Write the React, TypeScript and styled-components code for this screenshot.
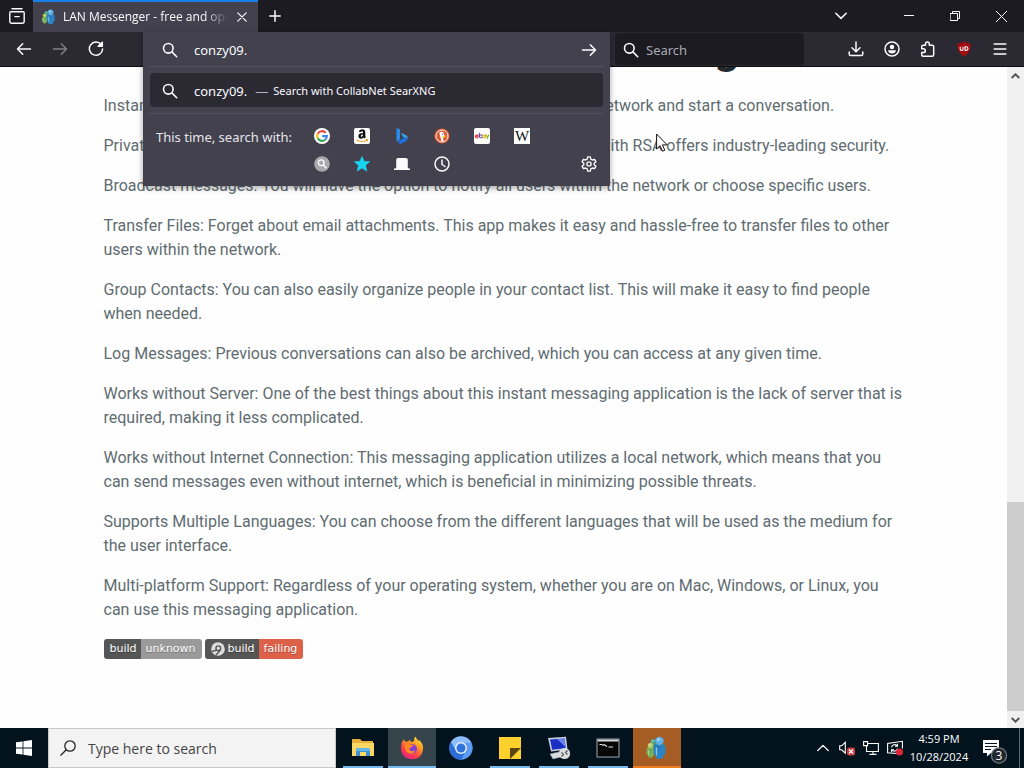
import React from "react";
import styled, { createGlobalStyle } from "styled-components";

const GlobalStyle = createGlobalStyle`
  *, *::before, *::after { box-sizing: border-box; }
  html, body { margin: 0; height: 100%; }
  body { overflow: hidden; background: #fff; }
  button, input { font: inherit; color: inherit; border: 0; background: none; padding: 0; margin: 0; outline: 0; }
  svg { display: block; flex: none; }
`;

const ui = `"Noto Sans", "Open Sans", sans-serif`;

const Screen = styled.div`
  display: flex;
  flex-direction: column;
  height: 100vh;
  position: relative;
  font-family: ${ui};
`;

/* ---- browser chrome ---- */

const TabStrip = styled.header`
  display: flex;
  flex: none;
  height: 32px;
  background: #1c1b22;
  color: #fbfbfe;
`;

const StripButton = styled.button<{ $w: number }>`
  width: ${(p) => p.$w}px;
  display: flex;
  align-items: center;
  justify-content: center;
`;

const Tab = styled.div`
  display: flex;
  align-items: center;
  width: 225px;
  padding: 0 8px;
  gap: 6px;
  background: #42414d;
  border-top: 2px solid #1a7fe8;
`;

const TabTitle = styled.span`
  flex: 1;
  min-width: 0;
  overflow: hidden;
  white-space: nowrap;
  font-family: "Open Sans", sans-serif;
  font-size: 12px;
  line-height: 16px;
  mask-image: linear-gradient(to left, transparent, #000 24px);
`;

const Spacer = styled.div`
  flex: 1;
`;

const WindowControls = styled.div`
  display: flex;
  margin-left: 30px;
`;

const Toolbar = styled.nav`
  display: flex;
  flex: none;
  align-items: center;
  height: 35px;
  padding: 0 6px;
  background: #2b2a33;
  border-bottom: 1px solid #0c0c0d;
  color: #fbfbfe;
`;

const ToolButton = styled.button<{ $dim?: boolean }>`
  display: flex;
  align-items: center;
  justify-content: center;
  width: 36px;
  height: 32px;
  opacity: ${(p) => (p.$dim ? 0.4 : 1)};
`;

const UrlSlot = styled.div`
  flex: 1;
  position: relative;
  align-self: stretch;
  margin: 0 5px 0 29px;
`;

const UrlPanel = styled.div`
  position: absolute;
  z-index: 2;
  top: 0;
  left: 0;
  right: 0;
  padding: 0 7px 8px;
  background: #42414d;
  box-shadow: 0 2px 6px rgba(0, 0, 0, 0.35);
  font-size: 13px;
`;

const UrlRow = styled.div`
  display: flex;
  align-items: center;
  height: 35px;
  padding: 1px 7px 0 13px;
  gap: 16px;
  margin: 0 -1px;
  border-bottom: 1px solid #53525e;
`;

const UrlInput = styled.input`
  flex: 1;
  min-width: 0;
`;

const GoButton = styled.button`
  display: flex;
`;

const Suggestion = styled.button`
  display: flex;
  align-items: center;
  width: 100%;
  height: 34px;
  margin: 6px 0;
  padding: 1px 12px 0;
  border-radius: 4px;
  background: #2b2a33;
`;

const SuggestionQuery = styled.span`
  margin-left: 16px;
`;

const SuggestionAction = styled.span`
  margin-left: 5px;
  font-size: 11px;
`;

const Dash = styled.span`
  margin-left: 8px;
  color: #b5b5bd;
`;

const EngineArea = styled.div`
  display: flex;
  align-items: flex-start;
  margin: 0 -1px;
  padding: 8px 0 0 7px;
  border-top: 1px solid #53525e;
`;

const EngineLabel = styled.span`
  width: 146px;
  line-height: 30px;
  white-space: nowrap;
  color: #e6e6ec;
`;

const EngineGrid = styled.div`
  display: grid;
  grid-template-columns: repeat(6, 40px);
  grid-auto-rows: 28px;
  flex: 1;
`;

const EngineButton = styled.button`
  display: flex;
  align-items: center;
  justify-content: center;
`;

const SettingsButton = styled(EngineButton)`
  align-self: flex-end;
  width: 28px;
  height: 28px;
  margin-right: 1px;
`;

const SearchBox = styled.label`
  display: flex;
  align-items: center;
  width: 189px;
  height: 32px;
  gap: 7px;
  padding: 1px 8px 0;
  margin: 0 34px 0 0;
  border-radius: 4px;
  background: #1c1b22;
  font-size: 13px;
`;

const SearchInput = styled.input`
  flex: 1;
  min-width: 0;
  &::placeholder { color: #a9a9b2; opacity: 1; }
`;

/* ---- web page ---- */

const Viewport = styled.div`
  display: flex;
  flex: 1;
  min-height: 0;
  background: #fefefe;
`;

const Page = styled.main`
  flex: 1;
  min-width: 0;
  overflow: hidden;
  display: flex;
  justify-content: center;
`;

const Article = styled.article`
  width: 100%;
  max-width: 800px;
  font-family: Roboto, sans-serif;
  font-size: 16px;
  line-height: 24px;
  color: #606c71;
`;

const Heading = styled.h2`
  margin: -43px 0 22px;
  text-align: center;
  font-size: 44px;
  line-height: 48px;
  font-weight: 700;
  color: #24292e;
`;

const Paragraph = styled.p`
  margin: 0 0 16px;
`;

const Badges = styled.div`
  display: flex;
  gap: 3px;
  padding-top: 1px;
  font-family: "DejaVu Sans", sans-serif;
  font-size: 11px;
  line-height: 20px;
  color: #fff;
`;

const Badge = styled.a`
  display: flex;
  color: inherit;
  text-decoration: none;
  border-radius: 3px;
  overflow: hidden;
  text-shadow: 0 1px 0 rgba(0, 0, 0, 0.3);
`;

const BadgePart = styled.span<{ $color: string }>`
  display: flex;
  align-items: center;
  gap: 3px;
  padding: 0 5px;
  background: ${(p) => p.$color};
  &:first-child { padding: 0 4px 0 6px; }
  &:last-child { padding: 0 6px 0 5px; }
`;

const Scrollbar = styled.div`
  display: flex;
  flex-direction: column;
  align-items: center;
  width: 17px;
  background: #f0f0f0;
`;

const ScrollButton = styled.button`
  display: flex;
  align-items: center;
  justify-content: center;
  width: 17px;
  height: 17px;
`;

const ScrollTrack = styled.div`
  display: flex;
  flex-direction: column;
  justify-content: flex-end;
  flex: 1;
  width: 100%;
`;

const ScrollThumb = styled.div`
  height: 33.3%;
  background: #cdcdcd;
`;

const Pointer = styled.svg`
  position: absolute;
  z-index: 3;
  left: 656px;
  top: 133px;
`;

/* ---- taskbar ---- */

const Taskbar = styled.footer`
  display: flex;
  flex: none;
  height: 40px;
  background: #02131d;
  color: #fff;
`;

const StartButton = styled.button`
  display: flex;
  align-items: center;
  justify-content: center;
  width: 48px;
`;

const TaskSearch = styled.label`
  display: flex;
  align-items: center;
  width: 288px;
  gap: 12px;
  padding: 0 11px;
  border: 1px solid #c8c8c8;
  background: #f3f3f3;
  color: #333;
`;

const TaskSearchInput = styled.input`
  flex: 1;
  min-width: 0;
  font-family: "Open Sans", sans-serif;
  font-size: 14px;
  &::placeholder { color: #444; opacity: 1; }
`;

const TaskApps = styled.div`
  display: flex;
  gap: 1px;
  margin-left: 3px;
`;

const TaskApp = styled.button<{ $bg?: string; $line?: string; $wide?: boolean }>`
  display: flex;
  align-items: center;
  justify-content: center;
  width: 48px;
  padding-bottom: 1px;
  background: ${(p) => p.$bg ?? "transparent"};
  position: relative;
  &::after {
    content: "";
    position: absolute;
    bottom: 0;
    left: ${(p) => (p.$wide ? 0 : 4)}px;
    right: ${(p) => (p.$wide ? 0 : 4)}px;
    height: 2px;
    background: ${(p) => p.$line ?? "transparent"};
  }
`;

const Tray = styled.div`
  display: flex;
  align-items: center;
`;

const TrayButton = styled.button`
  display: flex;
  align-items: center;
  justify-content: center;
  width: 24px;
  height: 40px;
`;

const Clock = styled.time`
  width: 64px;
  text-align: center;
  white-space: nowrap;
  font-family: "Open Sans", sans-serif;
  font-size: 11px;
  line-height: 18px;
`;

const NoticeButton = styled(TrayButton)`
  width: 48px;
`;

const ShowDesktop = styled.button`
  width: 5px;
  height: 40px;
  border-left: 1px solid #5b6870;
`;

/* ---- icons ---- */

type IconProps = { size?: number; children: React.ReactNode; box?: string; sw?: number };

const Line = ({ size = 16, box = "0 0 16 16", sw = 1.5, children }: IconProps) => (
  <svg width={size} height={size} viewBox={box} fill="none" stroke="currentColor" strokeWidth={sw} strokeLinecap="round" strokeLinejoin="round" aria-hidden="true">
    {children}
  </svg>
);

const Magnifier = () => (
  <Line sw={1.6}>
    <circle cx="6.3" cy="6.3" r="4.8" />
    <path d="M9.9 9.9 14.7 14.7" />
  </Line>
);

const RightArrow = () => (
  <Line><path d="M1.5 8H14.5M9.3 2.8 14.5 8 9.3 13.2" /></Line>
);

const Person = ({ x, y, s, head, body }: { x: number; y: number; s: number; head: string; body: string }) => (
  <g transform={`translate(${x} ${y}) scale(${s})`}>
    <path d="M0 11Q0 7.5 3.5 7.5H8.5Q12 7.5 12 11V17Q11.5 18.5 10 18.5L9.5 21.5Q6 23.4 2.5 21.5L2 18.5Q.5 18.5 0 17Z" fill={body} />
    <path d="M3.5 9.5 6 12 8.5 9.5" fill="none" stroke="#1c5580" strokeWidth=".8" opacity=".6" />
    <circle cx="6" cy="4.4" r="4.2" fill={head} />
    <path d="M3 11V19" stroke="#d5f3ff" strokeWidth="1.2" opacity=".6" />
    <circle cx="5" cy="3.2" r="1.4" fill="#fff" opacity=".5" />
  </g>
);

const Messenger = ({ size }: { size: number }) => (
  <svg width={size} height={size} viewBox="0 0 24 24" aria-hidden="true">
    <Person x={4.5} y={3} s={0.62} head="#4aa596" body="#2f8b80" />
    <Person x={1.5} y={6.5} s={0.68} head="#b3cb5e" body="#7bb052" />
    <Person x={8.5} y={0.5} s={1} head="#5fb0e6" body="#2d84c4" />
  </svg>
);

const Amazon = () => (
  <svg width="16" height="16" viewBox="0 0 16 16" aria-hidden="true">
    <rect width="16" height="16" rx="2" fill="#fff" />
    <path d="M4.7 3.8Q5.2 1.3 8.1 1.3 11.3 1.3 11.3 4.3V7.8Q11.3 8.5 11.9 9.2L10.3 10.6Q9.6 10.2 9.3 9.5 8.3 10.7 6.9 10.7 4.4 10.7 4.4 8.1 4.4 5.2 9 5.1V4.4Q9 3.2 8 3.2 7.1 3.2 6.9 4.1ZM9 6.6Q6.8 6.6 6.8 7.9 6.8 8.8 7.6 8.8 9 8.7 9 6.6Z" fill="#111" fillRule="evenodd" />
    <path d="M2.3 11.8Q7.5 15 13.2 12.2M11.7 11.7 13.7 11.6 13.1 13.4" fill="none" stroke="#f0a22d" strokeWidth="1.1" />
  </svg>
);

const Google = () => (
  <svg width="16" height="16" viewBox="0 0 16 16" aria-hidden="true">
    <circle cx="8" cy="8" r="8" fill="#fff" />
    <g fill="none" strokeWidth="2.1">
      <path d="M11.6 4.7A4.9 4.9 0 0 0 3.7 5.7" stroke="#ea4335" />
      <path d="M3.7 5.7A4.9 4.9 0 0 0 3.7 10.3" stroke="#fbbc05" />
      <path d="M3.7 10.3A4.9 4.9 0 0 0 11.2 11.7" stroke="#34a853" />
      <path d="M11.2 11.7A4.9 4.9 0 0 0 12.9 8.1H8.2" stroke="#4285f4" />
    </g>
  </svg>
);

const Bing = () => (
  <svg width="16" height="16" viewBox="0 0 16 16" aria-hidden="true">
    <path d="M2.5 0 6 1.3V11L3.8 13.8 2.5 12.8Z" fill="#2c8bea" />
    <path d="M7 4.8 12.5 7.5Q14 8.6 13.6 10.5L8.9 8.8Z" fill="#35a6ee" />
    <path d="M3.8 13.8 10 9.4 13.6 10.2Q13.8 12 12 13.3L7.3 15.8Q5.1 16.3 3.8 13.8Z" fill="#1c70d8" />
  </svg>
);

const Duck = () => (
  <svg width="16" height="16" viewBox="0 0 16 16" aria-hidden="true">
    <circle cx="8" cy="8" r="7.6" fill="#de5833" />
    <circle cx="8" cy="8" r="6" fill="none" stroke="#fff" strokeWidth=".9" />
    <path d="M5.3 4.8Q6.5 3 8.6 4 10.5 4.8 10.4 7.5L10 9.2 8.8 10.1 9.8 13.4 7.5 13.6Z" fill="#fff" />
    <path d="M8.7 8.1 12 7.8 11 9.5 8.7 9.6Z" fill="#fdd20a" />
    <circle cx="8.7" cy="6.1" r=".7" fill="#234" />
  </svg>
);

const Ebay = () => (
  <svg width="16" height="16" viewBox="0 0 16 16" aria-hidden="true">
    <rect width="16" height="16" rx="2" fill="#fff" />
    <g fill="none" strokeWidth="1.1">
      <path d="M1.5 8.2H4.4A1.5 1.5 0 1 0 4 9.5" stroke="#e53238" />
      <path d="M5.4 4.8V9.8M5.4 8.3A1.5 1.5 0 1 0 8.4 8.3 1.5 1.5 0 1 0 5.4 8.3" stroke="#6a58b5" />
      <path d="M11.4 6.7V9.8M11.4 8.4A1.3 1.3 0 1 0 8.8 8.4 1.3 1.3 0 1 0 11.4 8.4" stroke="#e9b31b" />
      <path d="M12 6.5 13.5 9.5M15 6.5 12.8 11.3" stroke="#86b817" />
    </g>
  </svg>
);

const WikiGlyph = styled.span`
  width: 16px;
  height: 16px;
  background: #fff;
  color: #111;
  font-family: "Liberation Serif", serif;
  font-size: 15px;
  line-height: 16px;
  text-align: center;
`;

const SearxEngine = () => (
  <svg width="16" height="16" viewBox="0 0 16 16" aria-hidden="true">
    <circle cx="8" cy="8" r="7.8" fill="#a9a9ac" />
    <circle cx="7.2" cy="6.8" r="2.9" fill="none" stroke="#fff" strokeWidth="1.3" />
    <path d="M9.3 9 12.4 12.2" stroke="#fff" strokeWidth="1.5" />
  </svg>
);

const Star = () => (
  <svg width="16" height="16" viewBox="0 0 16 16" aria-hidden="true">
    <path d="M8 .4 10.1 5.3 15.7 5.7 11.5 9.3 12.8 15.1 8 12.1 3.2 15.1 4.5 9.3 .3 5.7 5.9 5.3Z" fill="#17d5f2" stroke="#17d5f2" strokeLinejoin="round" strokeWidth=".6" />
  </svg>
);

const TabsIcon = () => (
  <svg width="16" height="16" viewBox="0 0 16 16" aria-hidden="true">
    <path d="M0 12.6H1.2Q2.2 12.6 2.2 11.6V4Q2.2 2 4.2 2H11.8Q13.8 2 13.8 4V11.6Q13.8 12.6 14.8 12.6H16V14H0Z" fill="#fbfbfe" />
  </svg>
);

const Gear = () => (
  <Line sw={1.4}>
    <circle cx="8" cy="8" r="2.1" />
    <path d="M6.7 .9H9.3L9.8 3.1 11.4 4 13.5 3.3 14.9 5.7 13.2 7.2V8.8L14.9 10.3 13.5 12.7 11.4 12 9.8 12.9 9.3 15.1H6.7L6.2 12.9 4.6 12 2.5 12.7 1.1 10.3 2.8 8.8V7.2L1.1 5.7 2.5 3.3 4.6 4 6.2 3.1Z" />
  </Line>
);

const AppveyorLogo = () => (
  <svg width="14" height="14" viewBox="0 0 14 14" aria-hidden="true">
    <circle cx="7" cy="7" r="6.8" fill="#ddd" />
    <circle cx="7.3" cy="6.3" r="2.4" fill="none" stroke="#555" strokeWidth="1.4" />
    <path d="M1 9.5 5.6 8.2M5 13 9.3 8.2" stroke="#555" strokeWidth="1.3" fill="none" />
  </svg>
);

const Explorer = () => (
  <svg width="24" height="24" viewBox="0 0 24 24" aria-hidden="true">
    <path d="M1 3H9L11 5H22V20H1Z" fill="#e8b03a" />
    <path d="M1 7H23V20H1Z" fill="#fbd865" />
    <path d="M5 20V14Q5 12 7 12H17Q19 12 19 14V20H15V16H9V20Z" fill="#3c93d1" />
    <path d="M5 14Q5 12 7 12H17Q19 12 19 14V15H5Z" fill="#65b6e8" />
  </svg>
);

const Firefox = () => (
  <svg width="24" height="24" viewBox="0 0 24 24" aria-hidden="true">
    <defs>
      <linearGradient id="fox" x1="0.8" y1="0" x2="0.2" y2="1">
        <stop offset="0" stopColor="#ffdf3f" />
        <stop offset=".35" stopColor="#ff9a20" />
        <stop offset=".7" stopColor="#ff3b4d" />
        <stop offset="1" stopColor="#e0218a" />
      </linearGradient>
    </defs>
    <path d="M2 6 4 3.3 5 5.6Q7 5.2 8 5.6L10.3 3.8 10.8 6.3 14.3 5Q13.5 2.5 15.4 .4 16.5 3.3 19.2 5.2L19.3 4Q24 8.5 22.9 14.3 21.3 23.2 12 23.3 2.3 23 1 13.5 .8 9 2 6Z" fill="url(#fox)" />
    <circle cx="12" cy="13" r="5" fill="#8a3fd4" />
    <path d="M4.5 9.2Q8 7 10.5 8.5L14 9 11.3 11.3Q9 11.8 9.2 13.5 11 16.5 15.3 14.5 13.5 18.8 9.2 17.6 5 16 4.5 9.2Z" fill="#ff8a22" />
  </svg>
);

const Chromium = () => (
  <svg width="24" height="24" viewBox="0 0 24 24" aria-hidden="true">
    <circle cx="12" cy="12" r="11.7" fill="#5b9bf2" />
    <path d="M2 6A11.7 11.7 0 0 0 12 23.7L16.8 15Z" fill="#2d6ed6" />
    <path d="M2 6A11.7 11.7 0 0 1 22.3 6.7H12Q6.6 7 6.8 14Z" fill="#8fbcfb" />
    <circle cx="12" cy="12" r="6" fill="#e6f0ff" />
    <circle cx="12" cy="12" r="4.5" fill="#2f73db" />
  </svg>
);

const StickyNote = () => (
  <svg width="24" height="24" viewBox="0 0 24 24" aria-hidden="true">
    <path d="M1 1H23V23H1Z" fill="#fdd02c" />
    <path d="M12 23V12H23Z" fill="#5b4412" />
  </svg>
);

const RemoteDesktop = () => (
  <svg width="24" height="24" viewBox="0 0 24 24" aria-hidden="true">
    <path d="M1 2 19 .8 20.5 13.5 4 15.5Z" fill="#c7cfdf" />
    <path d="M3 3.5 17.5 2.4 18.7 12.2 5.2 13.8Z" fill="#1a2fc4" />
    <path d="M10 3 17.5 2.4 18.5 11Z" fill="#6a86ee" />
    <path d="M3 18 14 15.5 18 20 6 23Z" fill="#d9dce2" stroke="#8a93a5" strokeWidth=".6" />
    <circle cx="17.5" cy="17.5" r="5.6" fill="#dcdfe0" />
    <path d="M14.5 16.5 16.5 18.5 14.5 20.5M20.5 14.5 18.5 16.5 20.5 18.5" fill="none" stroke="#555" strokeWidth="1.2" />
  </svg>
);

const Terminal = () => (
  <svg width="24" height="24" viewBox="0 0 24 24" aria-hidden="true">
    <rect x="1" y="3" width="22" height="18" fill="#070707" stroke="#a3a9ad" />
    <path d="M1.5 4.5H22.5" stroke="#d5d9db" strokeWidth="2" />
    <path d="M3.5 8.5H6M7 8V10M8 8.5 11 10.5M12.5 11H17" stroke="#e6e6e6" strokeWidth="1.2" />
  </svg>
);

const paragraphs = [
  "Instant Messaging: You can easily message some persons within the network and start a conversation.",
  "Private conversations: Messages are encrypted, and using encryption with RSA offers industry-leading security.",
  "Broadcast messages: You will have the option to notify all users within the network or choose specific users.",
  "Transfer Files: Forget about email attachments. This app makes it easy and hassle-free to transfer files to other users within the network.",
  "Group Contacts: You can also easily organize people in your contact list. This will make it easy to find people when needed.",
  "Log Messages: Previous conversations can also be archived, which you can access at any given time.",
  "Works without Server: One of the best things about this instant messaging application is the lack of server that is required, making it less complicated.",
  "Works without Internet Connection: This messaging application utilizes a local network, which means that you can send messages even without internet, which is beneficial in minimizing possible threats.",
  "Supports Multiple Languages: You can choose from the different languages that will be used as the medium for the user interface.",
  "Multi-platform Support: Regardless of your operating system, whether you are on Mac, Windows, or Linux, you can use this messaging application.",
];

const engines: { name: string; icon: React.ReactNode }[] = [
  { name: "Google", icon: <Google /> },
  { name: "Amazon", icon: <Amazon /> },
  { name: "Bing", icon: <Bing /> },
  { name: "DuckDuckGo", icon: <Duck /> },
  { name: "eBay", icon: <Ebay /> },
  { name: "Wikipedia", icon: <WikiGlyph>W</WikiGlyph> },
  { name: "SearXNG", icon: <SearxEngine /> },
  { name: "Bookmarks", icon: <Star /> },
  { name: "Tabs", icon: <TabsIcon /> },
  { name: "History", icon: <Line><circle cx="8" cy="8" r="7" /><path d="M8 4V8.5L11 10.5" /></Line> },
];

const blue = "#76b9ed";

const apps: { name: string; icon: React.ReactNode; bg?: string; line?: string; wide?: boolean }[] = [
  { name: "File Explorer", icon: <Explorer />, line: blue },
  { name: "Firefox", icon: <Firefox />, bg: "#36444c", line: blue, wide: true },
  { name: "Chromium", icon: <Chromium /> },
  { name: "Sticky Notes", icon: <StickyNote />, line: blue },
  { name: "Remote Desktop", icon: <RemoteDesktop />, line: blue },
  { name: "Command Prompt", icon: <Terminal />, line: blue },
  { name: "LAN Messenger", icon: <Messenger size={24} />, bg: "#a65d24", line: "#f07d1c", wide: true },
];

export default function App() {
  return (
    <Screen>
      <GlobalStyle />
      <TabStrip>
        <StripButton $w={33} aria-label="Firefox View">
          <Line sw={1.4}>
            <path d="M3 .8H13M1.8 3.8H14.2Q15.2 3.8 15.2 4.8V13.2Q15.2 15.2 13.2 15.2H2.8Q.8 15.2 .8 13.2V4.8Q.8 3.8 1.8 3.8ZM5.8 8.6H10.2" />
          </Line>
        </StripButton>
        <Tab>
          <Messenger size={16} />
          <TabTitle>LAN Messenger - free and open source</TabTitle>
          <StripButton $w={16} aria-label="Close tab">
            <Line size={10} box="0 0 10 10" sw={1.2}><path d="M.8 .8 9.2 9.2M9.2 .8 .8 9.2" /></Line>
          </StripButton>
        </Tab>
        <StripButton $w={33} aria-label="New tab">
          <Line size={12} box="0 0 12 12"><path d="M6 .8V11.2M.8 6H11.2" /></Line>
        </StripButton>
        <Spacer />
        <StripButton $w={30} aria-label="List all tabs">
          <Line size={12} box="0 0 12 12"><path d="M.8 3.2 6 8.4 11.2 3.2" /></Line>
        </StripButton>
        <WindowControls>
          <StripButton $w={46} aria-label="Minimize">
            <Line size={10} box="0 0 10 10" sw={1}><path d="M0 4.5H10" /></Line>
          </StripButton>
          <StripButton $w={46} aria-label="Restore">
            <Line size={10} box="0 0 10 10" sw={1}><path d="M.5 2.5H7.5V9.5H.5ZM2.5 2.5V.5H9.5V7.5H7.5" /></Line>
          </StripButton>
          <StripButton $w={46} aria-label="Close">
            <Line size={11} box="0 0 11 11" sw={1}><path d="M.3 .3 10.7 10.7M10.7 .3 .3 10.7" /></Line>
          </StripButton>
        </WindowControls>
      </TabStrip>

      <Toolbar>
        <ToolButton aria-label="Back">
          <Line><path d="M14.5 8H1.5M6.7 2.8 1.5 8 6.7 13.2" /></Line>
        </ToolButton>
        <ToolButton aria-label="Forward" $dim><RightArrow /></ToolButton>
        <ToolButton aria-label="Reload">
          <Line><path d="M13.2 3.6A6.6 6.6 0 1 0 14.6 8" /><path d="M14.3 1.3V5.3H10.2Z" fill="currentColor" /></Line>
        </ToolButton>
        <UrlSlot>
          <UrlPanel>
            <UrlRow>
              <Magnifier />
              <UrlInput aria-label="Address" defaultValue="conzy09." />
              <GoButton aria-label="Go"><RightArrow /></GoButton>
            </UrlRow>
            <Suggestion>
              <Magnifier />
              <SuggestionQuery>conzy09.</SuggestionQuery>
              <Dash>—</Dash>
              <SuggestionAction>Search with CollabNet SearXNG</SuggestionAction>
            </Suggestion>
            <EngineArea>
              <EngineLabel>This time, search with:</EngineLabel>
              <EngineGrid>
                {engines.map((e) => (
                  <EngineButton key={e.name} aria-label={e.name}>{e.icon}</EngineButton>
                ))}
              </EngineGrid>
              <SettingsButton aria-label="Search settings"><Gear /></SettingsButton>
            </EngineArea>
          </UrlPanel>
        </UrlSlot>
        <SearchBox>
          <Magnifier />
          <SearchInput placeholder="Search" aria-label="Search" />
        </SearchBox>
        <ToolButton aria-label="Downloads">
          <Line><path d="M8 1V10.5M4 6.8 8 10.7 12 6.8M1.2 11V13Q1.2 14.6 2.8 14.6H13.2Q14.8 14.6 14.8 13V11" /></Line>
        </ToolButton>
        <ToolButton aria-label="Account">
          <Line>
            <circle cx="8" cy="8" r="7" />
            <circle cx="8" cy="6" r="2.2" fill="currentColor" stroke="none" />
            <path d="M4 9.2H12Q11.4 12.4 8 12.4 4.6 12.4 4 9.2Z" fill="currentColor" stroke="none" />
          </Line>
        </ToolButton>
        <ToolButton aria-label="Extensions">
          <Line><path d="M5.5 4.2V2.8A1.9 1.9 0 0 1 9.3 2.8V4.2H12.2Q13.7 4.2 13.7 5.7V13.7Q13.7 15.2 12.2 15.2H3.2Q1.7 15.2 1.7 13.7V11.6H3.4A1.9 1.9 0 0 0 3.4 7.8H1.7V5.7Q1.7 4.2 3.2 4.2Z" /></Line>
        </ToolButton>
        <ToolButton aria-label="uBlock Origin">
          <svg width="16" height="16" viewBox="0 0 16 16" aria-hidden="true">
            <path d="M8 .5Q10.5 2.5 14.5 2.5 15.5 11.5 8 15.5 .5 11.5 1.5 2.5 5.5 2.5 8 .5Z" fill="#a30d12" />
            <path d="M4.2 5.8V8Q4.2 9.4 5.6 9.4 7 9.4 7 8V5.8M9 5.8V9.4H10Q12 9.4 12 7.6 12 5.8 10 5.8Z" fill="none" stroke="#fff" strokeWidth="1.1" />
          </svg>
        </ToolButton>
        <ToolButton aria-label="Menu">
          <Line><path d="M2.2 3H13.8M2.2 8H13.8M2.2 13H13.8" /></Line>
        </ToolButton>
      </Toolbar>

      <Viewport>
        <Page>
          <Article>
            <Heading>Features of LAN Messenger</Heading>
            {paragraphs.map((t) => (
              <Paragraph key={t}>{t}</Paragraph>
            ))}
            <Badges>
              <Badge href="#travis">
                <BadgePart $color="#555">build</BadgePart>
                <BadgePart $color="#9a9a9a">unknown</BadgePart>
              </Badge>
              <Badge href="#appveyor">
                <BadgePart $color="#555"><AppveyorLogo />build</BadgePart>
                <BadgePart $color="#dd6149">failing</BadgePart>
              </Badge>
            </Badges>
          </Article>
        </Page>
        <Scrollbar>
          <ScrollButton aria-label="Scroll up">
            <svg width="9" height="6" viewBox="0 0 9 6" fill="none" stroke="#555" strokeWidth="2"><path d="M.7 5 4.5 1.3 8.3 5" /></svg>
          </ScrollButton>
          <ScrollTrack><ScrollThumb /></ScrollTrack>
          <ScrollButton aria-label="Scroll down">
            <svg width="9" height="6" viewBox="0 0 9 6" fill="none" stroke="#555" strokeWidth="2"><path d="M.7 1 4.5 4.7 8.3 1" /></svg>
          </ScrollButton>
        </Scrollbar>
      </Viewport>

      <Taskbar>
        <StartButton aria-label="Start">
          <svg width="16" height="16" viewBox="0 0 16 16" fill="#fff" aria-hidden="true">
            <path d="M0 2.3 6.6 1.4V7.6H0ZM7.4 1.3 16 0V7.6H7.4ZM0 8.4H6.6V14.6L0 13.7ZM7.4 8.4H16V16L7.4 14.7Z" />
          </svg>
        </StartButton>
        <TaskSearch>
          <svg width="16" height="16" viewBox="0 0 16 16" fill="none" stroke="#222" strokeWidth="1.3" aria-hidden="true">
            <circle cx="10" cy="6" r="5.2" />
            <path d="M6.3 9.7 .5 15.5" />
          </svg>
          <TaskSearchInput placeholder="Type here to search" aria-label="Type here to search" />
        </TaskSearch>
        <TaskApps>
          {apps.map((a) => (
            <TaskApp key={a.name} aria-label={a.name} $bg={a.bg} $line={a.line} $wide={a.wide}>{a.icon}</TaskApp>
          ))}
        </TaskApps>
        <Spacer />
        <Tray>
          <TrayButton aria-label="Show hidden icons">
            <Line size={12} box="0 0 12 12" sw={1.2}><path d="M.8 8.5 6 3.3 11.2 8.5" /></Line>
          </TrayButton>
          <TrayButton aria-label="Volume muted">
            <svg width="16" height="16" viewBox="0 0 16 16" fill="none" aria-hidden="true">
              <path d="M.7 5.8H2.7L6.3 2.3V13.2L2.7 9.8H.7Z" stroke="#fff" strokeWidth="1.1" />
              <rect x="8" y="7.5" width="8" height="8" rx="2" fill="#d13a40" />
              <path d="M10 9.5 14 13.5M14 9.5 10 13.5" stroke="#fff" strokeWidth="1.3" />
            </svg>
          </TrayButton>
          <TrayButton aria-label="Network">
            <svg width="16" height="16" viewBox="0 0 16 16" fill="none" stroke="#fff" strokeWidth="1.1" aria-hidden="true">
              <path d="M5 3.5H15.4V11.5H3.5V6M10 11.5V14.4M6.5 14.4H13.5M.6 1.6H4.6V5.6H.6Z" />
            </svg>
          </TrayButton>
          <TrayButton aria-label="Windows Update">
            <svg width="16" height="16" viewBox="0 0 16 16" fill="none" stroke="#fff" strokeWidth="1.1" aria-hidden="true">
              <path d="M10 13.5.6 12.7V3.5L15.4 1.3V8.5" />
              <path d="M4.5 7.3A3.2 3.2 0 0 1 10.3 6M10.5 3.8V6.3H8M10.5 8.6A3.2 3.2 0 0 1 5 10M4.6 12.2V9.7H7" />
              <circle cx="12.5" cy="12" r="3.5" fill="#e02338" stroke="none" />
            </svg>
          </TrayButton>
          <Clock>4:59 PM<br />10/28/2024</Clock>
          <NoticeButton aria-label="3 notifications">
            <svg width="26" height="32" viewBox="0 0 26 32" aria-hidden="true">
              <path d="M1 8H17V21H9L5 24.5V21H1Z" fill="#fff" />
              <path d="M3 11.5H15M3 14.5H15M3 17.5H9" stroke="#02131d" strokeWidth="1" />
              <circle cx="17" cy="23.5" r="7.6" fill="#20272d" stroke="#6d767c" strokeWidth="1.3" />
              <text x="17" y="28" textAnchor="middle" fill="#fff" fontFamily="Open Sans, sans-serif" fontSize="12">3</text>
            </svg>
          </NoticeButton>
          <ShowDesktop aria-label="Show desktop" />
        </Tray>
      </Taskbar>

      <Pointer width="12" height="19" viewBox="0 0 12 19" aria-hidden="true">
        <path d="M.6 1V16L4 12.7 6.5 18.2 8.8 17.2 6.4 11.9H11.2Z" fill="#fff" stroke="#111" />
      </Pointer>
    </Screen>
  );
}
